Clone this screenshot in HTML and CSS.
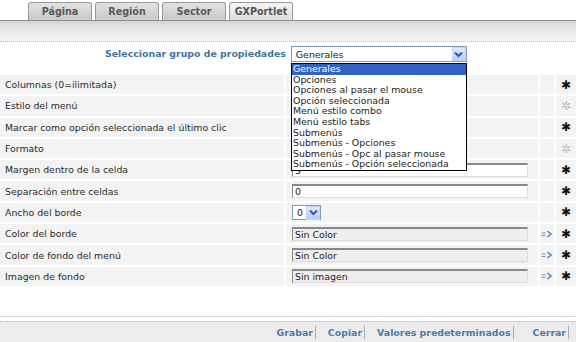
FILE: index.html
```html
<!DOCTYPE html>
<html lang="es">
<head>
<meta charset="utf-8">
<link rel="stylesheet" href="styles.css">
</head>
<body>
<div class="page">
  <div class="tabs">
    <div class="tab">Página</div>
    <div class="tab">Región</div>
    <div class="tab">Sector</div>
    <div class="tab active">GXPortlet</div>
  </div>
  <div class="band"></div>
  <div class="dots"></div>
  <div class="group">
    <span class="group-label">Seleccionar grupo de propiedades</span>
    <div class="select big">
      <span>Generales</span>
      <span class="sel-btn"><svg width="9" height="7" viewBox="0 0 9 7"><path d="M1 1.5 L4.5 5 L8 1.5" fill="none" stroke="#2a5db0" stroke-width="2"/></svg></span>
    </div>
    <ul class="listbox">
      <li class="hl">Generales</li>
      <li>Opciones</li>
      <li>Opciones al pasar el mouse</li>
      <li>Opción seleccionada</li>
      <li>Menú estilo combo</li>
      <li>Menú estilo tabs</li>
      <li>Submenús</li>
      <li>Submenús - Opciones</li>
      <li>Submenús - Opc al pasar mouse</li>
      <li>Submenús - Opción seleccionada</li>
    </ul>
  </div>
  <div class="props">
    <div class="c lab">Columnas (0=ilimitada)</div><div class="c"></div><div class="c"></div><div class="c ast">✱</div>
    <div class="c lab">Estilo del menú</div><div class="c"></div><div class="c"></div><div class="c ast light">✲</div>
    <div class="c lab">Marcar como opción seleccionada el último clic</div><div class="c"></div><div class="c"></div><div class="c ast">✱</div>
    <div class="c lab">Formato</div><div class="c"></div><div class="c"></div><div class="c ast light">✲</div>
    <div class="c lab">Margen dentro de la celda</div><div class="c"><div class="inp">3</div></div><div class="c"></div><div class="c ast">✱</div>
    <div class="c lab">Separación entre celdas</div><div class="c"><div class="inp">0</div></div><div class="c"></div><div class="c ast">✱</div>
    <div class="c lab">Ancho del borde</div><div class="c"><div class="select small"><span>0</span><span class="sel-btn"><svg width="9" height="7" viewBox="0 0 9 7"><path d="M1 1.5 L4.5 5 L8 1.5" fill="none" stroke="#2a5db0" stroke-width="2"/></svg></span></div></div><div class="c"></div><div class="c ast">✱</div>
    <div class="c lab">Color del borde</div><div class="c"><div class="inp ro">Sin Color</div></div><div class="c ico"><svg width="12" height="8" viewBox="0 0 12 8"><path d="M0.5 3H4.5M0.5 5.5H4.5" stroke="#6b9bd0" stroke-width="1.2"/><path d="M6.5 1 L10 4 L6.5 7" fill="none" stroke="#4a86c8" stroke-width="1.5"/></svg></div><div class="c ast">✱</div>
    <div class="c lab">Color de fondo del menú</div><div class="c"><div class="inp ro">Sin Color</div></div><div class="c ico"><svg width="12" height="8" viewBox="0 0 12 8"><path d="M0.5 3H4.5M0.5 5.5H4.5" stroke="#6b9bd0" stroke-width="1.2"/><path d="M6.5 1 L10 4 L6.5 7" fill="none" stroke="#4a86c8" stroke-width="1.5"/></svg></div><div class="c ast">✱</div>
    <div class="c lab">Imagen de fondo</div><div class="c"><div class="inp ro">Sin imagen</div></div><div class="c ico"><svg width="12" height="8" viewBox="0 0 12 8"><path d="M0.5 3H4.5M0.5 5.5H4.5" stroke="#6b9bd0" stroke-width="1.2"/><path d="M6.5 1 L10 4 L6.5 7" fill="none" stroke="#4a86c8" stroke-width="1.5"/></svg></div><div class="c ast">✱</div>
  </div>
  <div class="spacer"></div>
  <div class="footer">
    <a>Grabar</a><a>Copiar</a><a>Valores predeterminados</a><a class="last">Cerrar</a>
  </div>
</div>
</body>
</html>
```
FILE: styles.css
```css
* { box-sizing: border-box; }
html, body { margin: 0; padding: 0; background: #fff; }
body { font-family: "DejaVu Sans", Verdana, sans-serif; font-size: 9.4px; color: #222; }
.page { width: 576px; height: 342px; overflow: hidden; display: flex; flex-direction: column; }

.tabs { height: 21px; display: flex; align-items: flex-end; gap: 3px; padding-left: 28px; border-bottom: 1px solid #8d8d8d; }
.tab { width: 64px; height: 18px; text-align: center; border: 1px solid #9a9a9a; border-bottom: none; border-radius: 3px 3px 0 0;
  background: linear-gradient(#e2e2e2, #c9c9c9); font-weight: bold; color: #5a5a5a; font-size: 9.6px; line-height: 17px; }
.tab.active { background: linear-gradient(#f4f4f4, #dedede); color: #555; }

.band { height: 20px; background: linear-gradient(#d6d6d6, #efefef 70%, #f2f2f2); }
.dots { height: 1px; border-top: 1px dotted #b8b8b8; }

.group { position: relative; height: 33px; display: flex; align-items: flex-start; padding-top: 4px; padding-left: 105px; gap: 5px; }
.group-label { font-weight: bold; color: #41759f; line-height: 16px; }
.select { display: flex; align-items: center; justify-content: space-between; border: 1px solid #7f9db9; background: #fff; height: 16px; padding-left: 4px; }
.select.big { width: 176px; }
.select.small { width: 29px; height: 15px; margin-top: 1px; margin-left: 6px; }
.sel-btn { width: 14px; height: 14px; background: linear-gradient(#dfe9fb, #b8cdf3); border: 1px solid #c3d3fd; display: flex; align-items: center; justify-content: center; }

.listbox { position: absolute; left: 291px; top: 21px; width: 176px; margin: 0; padding: 0; list-style: none; background: #fff; border: 1px solid #000; z-index: 5; }
.listbox li { height: 10.6px; line-height: 10.6px; padding-left: 1px; font-size: 9.4px; white-space: nowrap; }
.listbox li.hl { background: #3163c5; color: #fff; }

.props { display: grid; grid-template-columns: 284px 252px 14px 20px; grid-auto-rows: 19.3px; gap: 2px; background: #fff; }
.c { background: #f3f3f3; display: flex; align-items: center; }
.lab { padding-left: 5px; color: #2a2a2a; white-space: nowrap; }
.ast { justify-content: center; font-size: 12px; color: #111; }
.ast.light { color: #bbb; }
.ico { justify-content: center; }
.inp { width: 236px; height: 14px; margin-left: 6px; background: #fff; border-top: 2px solid #888; border-left: 1px solid #888; border-right: 1px solid #ddd; border-bottom: 1px solid #ddd; padding-left: 2px; line-height: 11px; }
.inp.ro { background: #eeeeee; }

.spacer { flex: 1; border-bottom: 1px solid #dcdcdc; }
.footer { margin-top: 4px; height: 21px; border-top: 1px dotted #b8b8b8; background: #ececec; display: flex; justify-content: flex-end; align-items: center; padding-right: 7px; }
.footer a { font-weight: bold; color: #4c7ba8; border-right: 1px solid #aab; padding-right: 2px; margin-left: 12px; line-height: 13px; }
.footer a.last { margin-left: 19px; }
```
